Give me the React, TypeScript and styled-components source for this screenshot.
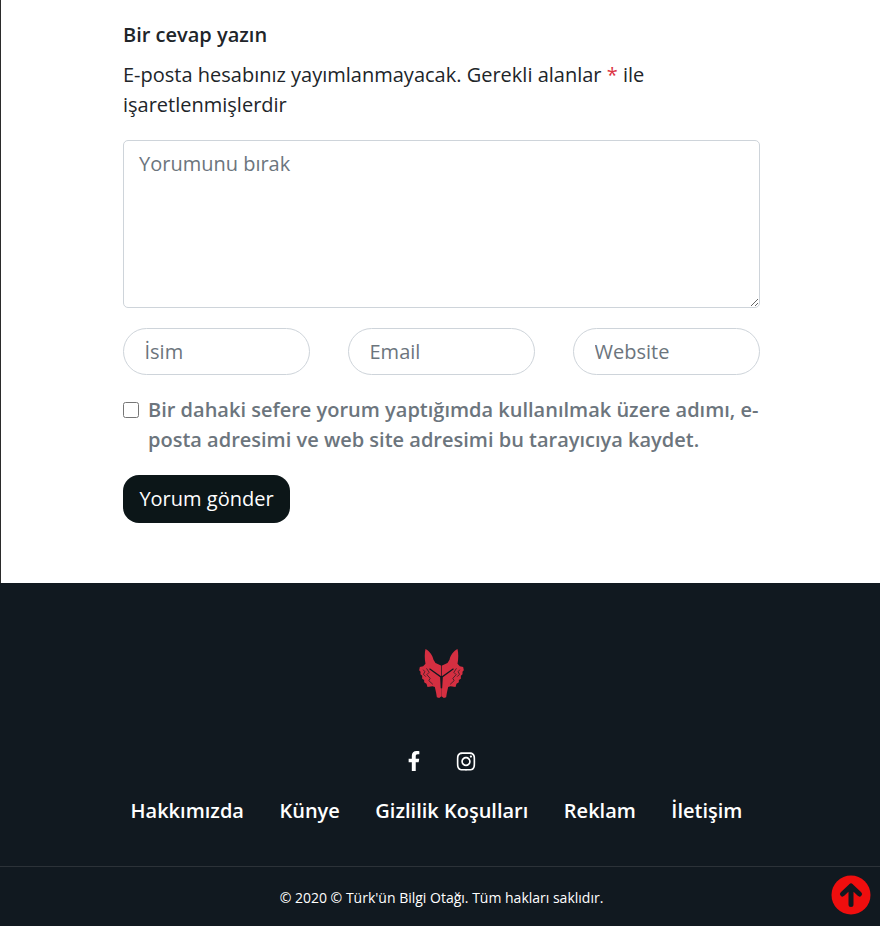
import styled, { createGlobalStyle } from "styled-components"
import { FaFacebookF, FaInstagram } from "react-icons/fa"

const GlobalStyle = createGlobalStyle`
  html, body {
    margin: 0;
    padding: 0;
    background: #fff;
  }
  body {
    font-family: "Open Sans", "Noto Sans", sans-serif;
    color: #212529;
  }
  * {
    box-sizing: border-box;
  }
`

const footerLinks = ["Hakkımızda", "Künye", "Gizlilik Koşulları", "Reklam", "İletişim"]

const App = () => {
  return (
    <Page>
      <GlobalStyle />
      <CommentSection>
        <Title>Bir cevap yazın</Title>
        <Notice>
          E-posta hesabınız yayımlanmayacak. Gerekli alanlar <Required>*</Required> ile işaretlenmişlerdir
        </Notice>
        <CommentArea placeholder="Yorumunu bırak" />
        <FieldRow>
          <Field placeholder="İsim" />
          <Field placeholder="Email" />
          <Field placeholder="Website" />
        </FieldRow>
        <ConsentRow>
          <Check type="checkbox" />
          <ConsentText>
            Bir dahaki sefere yorum yaptığımda kullanılmak üzere adımı, e-posta adresimi ve web site adresimi bu tarayıcıya kaydet.
          </ConsentText>
        </ConsentRow>
        <SubmitButton>Yorum gönder</SubmitButton>
      </CommentSection>
      <Footer>
        <FooterMain>
          <LogoWrap>
            <WolfLogo />
          </LogoWrap>
          <Socials>
            <SocialLink href="#"><FaFacebookF size={20} /></SocialLink>
            <SocialLink href="#"><FaInstagram size={21} /></SocialLink>
          </Socials>
          <FooterNav>
            {footerLinks.map((l) => (
              <FooterLink href="#" key={l}>{l}</FooterLink>
            ))}
          </FooterNav>
        </FooterMain>
        <Copyright>© 2020 © Türk'ün Bilgi Otağı. Tüm hakları saklıdır.</Copyright>
        <BackToTop href="#">
          <svg width="40" height="40" viewBox="0 0 40 40">
            <circle cx="20" cy="20" r="19.5" fill="#ef0e0e" />
            <path d="M20 29.500V11M11.500 19L20 11l8.500 8" fill="none" stroke="#111920" strokeWidth="5" strokeLinecap="round" strokeLinejoin="round" />
          </svg>
        </BackToTop>
      </Footer>
    </Page>
  )
}
export default App

// half of the wolf head, the other half is the same thing mirrored on x=155
const WolfHalf = () => (
  <g>
    <path
      fill="#d52f41"
      d="M155 108L137 100L131 90C128 76 118 64 107 58C104 70 104 88 107 102L100 110L90 112L88 122L92 126L92 134L97 138L97 147L103 151L103 158L110 162L113 172L128 170L135 172L139 190L141 203L148 205L155 200Z"
    />
    <path
      fill="none"
      stroke="#111920"
      strokeWidth="2"
      d="M110 116L118 128L111 135L121 146L117 153L129 164M100 120L105 126L101 134L108 141"
    />
    <path fill="#111920" d="M120 116L153 139L157 139L157 176L153 176L151 143L118 119Z" />
    <path fill="none" stroke="#111920" strokeWidth="1.500" d="M155 106V140" />
  </g>
)

const WolfLogo = () => (
  <svg width="45" height="49" viewBox="88 58 134 147">
    <WolfHalf />
    <g transform="matrix(-1 0 0 1 310 0)">
      <WolfHalf />
    </g>
  </svg>
)

const Page = styled.div`
  width: 880px;
  border-left: 1px solid #2b2b2b;
`

const CommentSection = styled.section`
  padding: 20px 120px 60px 122px;
  height: 583px;
`

const Title = styled.h4`
  margin: 0 0 10px;
  font-size: 20px;
  line-height: 30px;
  font-weight: 600;
  color: #212529;
`

const Notice = styled.p`
  margin: 0 0 20px;
  font-size: 20px;
  line-height: 30px;
  color: #212529;
`

const Required = styled.span`
  color: #dc3545;
`

const CommentArea = styled.textarea`
  display: block;
  width: 637px;
  height: 168px;
  padding: 8px 15px;
  border: 1px solid #ced4da;
  border-radius: 5px;
  font-family: inherit;
  font-size: 20px;
  line-height: 30px;
  color: #495057;
  &::placeholder {
    color: #6c757d;
    opacity: 1;
  }
`

const FieldRow = styled.div`
  display: flex;
  gap: 38px;
  margin-top: 20px;
`

const Field = styled.input`
  width: 187px;
  height: 47px;
  padding: 0 20.5px;
  border: 1px solid #ced4da;
  border-radius: 24px;
  font-family: inherit;
  font-size: 20px;
  color: #495057;
  &::placeholder {
    color: #6c757d;
    opacity: 1;
  }
`

const ConsentRow = styled.label`
  display: flex;
  align-items: flex-start;
  margin-top: 20px;
`

const Check = styled.input`
  flex: none;
  width: 16px;
  height: 16px;
  margin: 7px 9px 0 0;
`

const ConsentText = styled.span`
  font-size: 20px;
  line-height: 30px;
  font-weight: 600;
  color: #6c757d;
`

const SubmitButton = styled.button`
  display: block;
  margin-top: 20px;
  width: 167px;
  height: 48px;
  padding: 0 0 2px;
  border: 0;
  border-radius: 16px;
  background: #0c1618;
  color: #fff;
  font-family: inherit;
  font-size: 20px;
`

const Footer = styled.footer`
  position: relative;
  height: 343px;
  margin-left: -1px;
  background: #111920;
  color: #fff;
`

const FooterMain = styled.div`
  height: 284px;
  padding-top: 66px;
  border-bottom: 1px solid #2c3238;
  display: flex;
  flex-direction: column;
  align-items: center;
`

const LogoWrap = styled.div`
  display: flex;
  padding-left: 2px;
`

const Socials = styled.div`
  display: flex;
  align-items: center;
  gap: 32px;
  margin-top: 50px;
  height: 26px;
`

const SocialLink = styled.a`
  display: flex;
  width: 20px;
  justify-content: center;
  color: #fff;
`

const FooterNav = styled.nav`
  display: flex;
  gap: 35.5px;
  margin-top: 22px;
  padding-right: 7px;
`

const FooterLink = styled.a`
  font-size: 20px;
  line-height: 30px;
  font-weight: 600;
  color: #fff;
  text-decoration: none;
`

const Copyright = styled.div`
  margin-top: 20px;
  padding-left: 3px;
  text-align: center;
  font-size: 14px;
  line-height: 21px;
  color: #fff;
`

const BackToTop = styled.a`
  position: absolute;
  right: 9px;
  bottom: 11px;
  display: block;
  width: 40px;
  height: 40px;
  svg {
    display: block;
  }
`
